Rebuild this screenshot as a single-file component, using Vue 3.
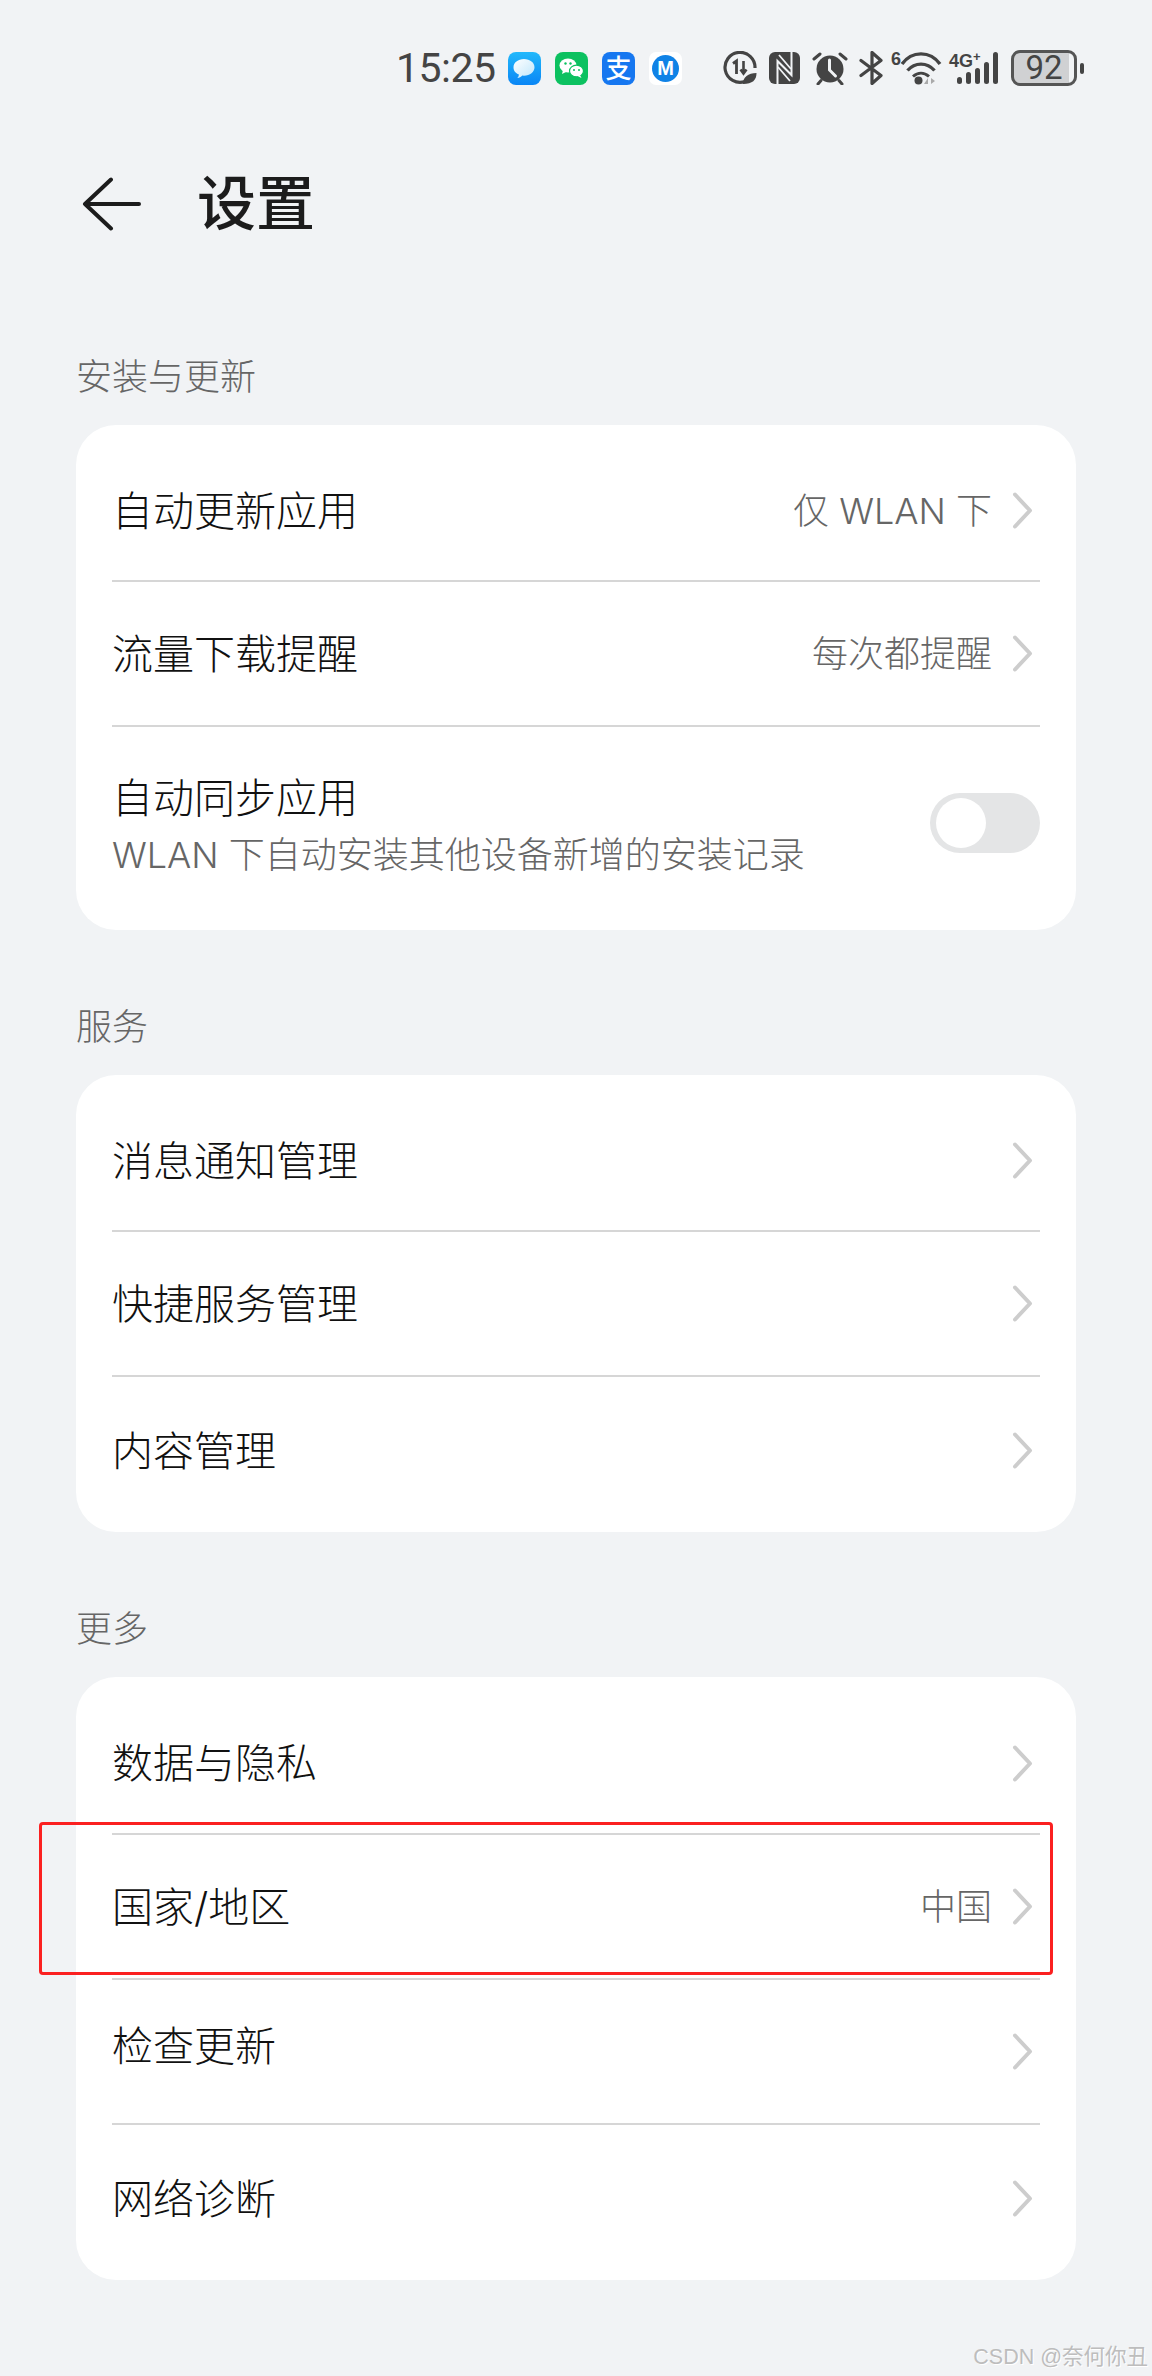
<script setup>
const sections = [
  {
    title: '安装与更新',
    rows: [
      { label: '自动更新应用', value: '仅 WLAN 下', h: 141 },
      { label: '流量下载提醒', value: '每次都提醒', h: 145 },
      { label: '自动同步应用', sub: 'WLAN 下自动安装其他设备新增的安装记录', toggle: true, h: 195 },
    ],
  },
  {
    title: '服务',
    rows: [
      { label: '消息通知管理', h: 141 },
      { label: '快捷服务管理', h: 145 },
      { label: '内容管理', h: 147 },
    ],
  },
  {
    title: '更多',
    rows: [
      { label: '数据与隐私', h: 142 },
      { label: '国家/地区', value: '中国', h: 145 },
      { label: '检查更新', h: 145, raised: true },
      { label: '网络诊断', h: 147 },
    ],
  },
]
</script>

<template>
  <div class="page">
    <div class="status">
      <span class="time">15:25</span>
      <div class="apps">
        <svg class="app" viewBox="0 0 33 33">
          <defs>
            <linearGradient id="msgbg" x1="0" y1="0" x2="0" y2="1">
              <stop offset="0" stop-color="#22b8fb" />
              <stop offset="1" stop-color="#0a86f5" />
            </linearGradient>
            <linearGradient id="msgfg" x1="0" y1="0" x2="1" y2="1">
              <stop offset="0" stop-color="#ffffff" />
              <stop offset="1" stop-color="#bfe6fb" />
            </linearGradient>
          </defs>
          <rect width="33" height="33" rx="8" fill="url(#msgbg)" />
          <path d="M16 7c6 0 10.500 3.600 10.500 8.300 0 4.800-4.500 8.400-10.500 8.400l-1.700-.1c-1.300 1.400-3 2.300-5 2.500 1-1.100 1.500-2.300 1.600-3.700C7.500 21.500 5.500 18.700 5.500 15.300 5.500 10.600 10 7 16 7z" fill="url(#msgfg)" />
        </svg>
        <svg class="app" viewBox="0 0 33 33">
          <rect width="33" height="33" rx="8" fill="#0cc160" />
          <ellipse cx="13" cy="13.500" rx="8.500" ry="7" fill="#fff" />
          <path d="M8 18l-1 4 4-2z" fill="#fff" />
          <ellipse cx="21.500" cy="19" rx="7" ry="5.800" fill="#fff" stroke="#0cc160" stroke-width="1.200" />
          <path d="M25 23l1.500 3-4-2z" fill="#fff" />
          <circle cx="10.500" cy="11.500" r="1.200" fill="#0cc160" />
          <circle cx="15.500" cy="11.500" r="1.200" fill="#0cc160" />
          <circle cx="19" cy="18" r="1" fill="#0cc160" />
          <circle cx="24" cy="18" r="1" fill="#0cc160" />
        </svg>
        <div class="app alipay">支</div>
        <div class="app mbox"><span class="mdot">M</span></div>
      </div>
      <div class="sys">
        <svg class="s34" viewBox="0 0 34 34">
          <path d="M22 30.500A15 15 0 1 1 32 17" fill="none" stroke="#444" stroke-width="3.200" />
          <path d="M10 12.500l3.500-2.500V23" fill="none" stroke="#444" stroke-width="2.800" />
          <path d="M20.500 10v12M17.500 18.500l3 4 3-4" fill="none" stroke="#444" stroke-width="2.600" />
          <path d="M20 33c0-7 5-11 13.500-11 0 7-4 11-13.500 11z" fill="#444" />
        </svg>
        <svg class="nfc" viewBox="0 0 31 32">
          <rect width="31" height="32" rx="6" fill="#444" />
          <path d="M8.500 32V9l14 14V0" fill="none" stroke="#f1f3f5" stroke-width="2" />
          <path d="M10 3l12 14M9 15l12 14" fill="none" stroke="#f1f3f5" stroke-width="1.800" />
        </svg>
        <svg class="alarm" viewBox="0 0 36 34">
          <circle cx="18" cy="18" r="13.500" fill="#444" />
          <path d="M17.500 9v10l6 6" fill="none" stroke="#f1f3f5" stroke-width="3" stroke-linecap="round" />
          <path d="M2 8l6-5M34 8l-6-5M6 33l3-3.500M30 33l-3-3.500" fill="none" stroke="#444" stroke-width="3" stroke-linecap="round" />
        </svg>
        <svg class="bt" viewBox="0 0 25 34">
          <path d="M2 9.500l20 15-9 8V1.500l9 8-20 15" fill="none" stroke="#444" stroke-width="3.200" stroke-linejoin="round" stroke-linecap="round" />
        </svg>
        <svg class="wifi" viewBox="0 0 49 34">
          <text x="0" y="14" class="tiny">6</text>
          <path d="M11 13C21 -0.500 39-0.500 49 13" fill="none" stroke="#444" stroke-width="3.400" />
          <path d="M16.500 19.500C24 11 36 11 43.500 19.500" fill="none" stroke="#444" stroke-width="3.400" />
          <path d="M22 25.500C27 21 33 21 38 25.500" fill="none" stroke="#444" stroke-width="3" />
          <circle cx="27.500" cy="29.500" r="4" fill="#444" />
          <path d="M37 33v-6l-4 6zM40 27v6l4-3z" fill="#aaa" />
        </svg>
        <svg class="cell" viewBox="0 0 50 34">
          <text x="0" y="16" class="tiny">4G</text>
          <text x="24" y="10" class="tiny plus">+</text>
          <rect x="8" y="26" width="5" height="7" rx="2.500" fill="#444" />
          <rect x="17" y="21" width="5" height="12" rx="2.500" fill="#444" />
          <rect x="26" y="17" width="5" height="16" rx="2.500" fill="#444" />
          <rect x="35" y="11" width="5" height="22" rx="2.500" fill="#444" />
          <rect x="44" y="1" width="5" height="32" rx="2.500" fill="#444" />
        </svg>
        <div class="battery">
          <div class="cell-body"><span class="pct">92</span></div>
          <div class="tip"></div>
        </div>
      </div>
    </div>

    <div class="header">
      <svg class="back" viewBox="0 0 60 54">
        <path d="M29 2.500L3 27l26 24.500M3 27h54" fill="none" stroke="#1c1c1c" stroke-width="4" stroke-linecap="round" stroke-linejoin="round" />
      </svg>
      <h1 class="title">设置</h1>
    </div>

    <section v-for="s in sections" :key="s.title" class="section">
      <div class="section-title">{{ s.title }}</div>
      <div class="card">
        <div v-for="r in s.rows" :key="r.label" class="row" :style="{ height: r.h + 'px' }">
          <div class="text" :class="{ raised: r.raised }">
            <div class="label">{{ r.label }}</div>
            <div v-if="r.sub" class="sub">{{ r.sub }}</div>
          </div>
          <div v-if="r.toggle" class="toggle"><div class="knob"></div></div>
          <template v-else>
            <span v-if="r.value" class="value">{{ r.value }}</span>
            <svg class="chev" viewBox="0 0 21 37">
              <path d="M3 2.500L18 18.500 3 34.500" fill="none" stroke="#cdcdcd" stroke-width="4" stroke-linecap="round" stroke-linejoin="round" />
            </svg>
          </template>
        </div>
      </div>
    </section>

    <div class="highlight"></div>
    <div class="watermark">CSDN @奈何你丑</div>
  </div>
</template>

<style scoped>
.page {
  position: relative;
  width: 1152px;
  height: 2376px;
  overflow: hidden;
  background: #f1f3f5;
  font-family: Inter, "Noto Sans CJK SC", "Noto Sans", sans-serif;
  font-weight: 300;
  color: #111;
}
.status {
  display: flex;
  align-items: center;
  height: 34px;
  padding: 51px 0 0 396px;
}
.time {
  flex: none;
  width: 99px;
  font-family: Roboto, sans-serif;
  font-weight: 400;
  font-size: 41px;
  letter-spacing: -0.5px;
  line-height: 34px;
  color: #444;
  white-space: nowrap;
}
.apps {
  display: flex;
  gap: 14px;
  margin-left: 13px;
}
.app {
  width: 33px;
  height: 33px;
  flex: none;
}
.alipay {
  display: flex;
  align-items: center;
  justify-content: center;
  border-radius: 8px;
  background: #1677f0;
  color: #fff;
  font-size: 26px;
  font-weight: 500;
  line-height: 33px;
}
.mbox {
  display: flex;
  align-items: center;
  justify-content: center;
  border-radius: 7px;
  background: #fff;
}
.mdot {
  width: 27px;
  height: 27px;
  border-radius: 50%;
  background: #0f82e6;
  color: #fff;
  font-family: "Liberation Sans", sans-serif;
  font-size: 20px;
  font-weight: 700;
  line-height: 27px;
  text-align: center;
}
.sys {
  display: flex;
  align-items: center;
  margin-left: 41px;
}
.s34 {
  width: 34px;
  height: 34px;
}
.nfc {
  width: 31px;
  height: 32px;
  margin-left: 12px;
}
.alarm {
  width: 36px;
  height: 34px;
  margin-left: 12px;
}
.bt {
  width: 25px;
  height: 34px;
  margin-left: 11px;
}
.wifi {
  width: 49px;
  height: 34px;
  margin-left: 7px;
  overflow: visible;
}
.cell {
  width: 50px;
  height: 34px;
  margin-left: 9px;
  overflow: visible;
}
.tiny {
  font-family: "Liberation Sans", sans-serif;
  font-size: 18px;
  font-weight: 700;
  fill: #444;
}
.plus {
  font-size: 13px;
}
.battery {
  display: flex;
  align-items: center;
  margin-left: 12px;
}
.cell-body {
  box-sizing: border-box;
  display: flex;
  align-items: center;
  justify-content: center;
  width: 66px;
  height: 36px;
  border: 3px solid #555;
  border-radius: 9px;
  background: linear-gradient(to right, #d0d1d3 92%, #f1f3f5 92%);
}
.pct {
  font-family: Roboto, sans-serif;
  font-weight: 400;
  font-size: 33px;
  line-height: 30px;
  color: #444;
}
.tip {
  width: 4px;
  height: 11px;
  margin-left: 3px;
  border-radius: 2px;
  background: #444;
}
.header {
  box-sizing: border-box;
  display: flex;
  align-items: center;
  height: 268px;
  padding: 0 0 31px 82px;
}
.back {
  width: 60px;
  height: 54px;
  flex: none;
}
.title {
  margin: 0 0 0 55px;
  font-size: 59px;
  font-weight: 500;
  line-height: 70px;
  color: #1c1c1c;
}
.section {
  margin-bottom: 73px;
}
.section-title {
  height: 48px;
  margin-bottom: 24px;
  padding-left: 76px;
  font-size: 36px;
  line-height: 48px;
  color: #666;
}
.card {
  box-sizing: border-box;
  width: 1000px;
  margin-left: 76px;
  padding: 16px 36px 8px;
  border-radius: 40px;
  background: #fff;
}
.row {
  box-sizing: border-box;
  display: flex;
  align-items: center;
}
.row:not(:last-child) {
  border-bottom: 2px solid #d6d6d6;
}
.text {
  flex: 1;
  min-width: 0;
}
.raised {
  padding-bottom: 12px;
}
.label {
  font-size: 41px;
  line-height: 56px;
  color: #111;
}
.sub {
  margin-top: 4px;
  font-size: 36px;
  line-height: 50px;
  color: #666;
  white-space: nowrap;
}
.value {
  font-size: 36px;
  line-height: 50px;
  color: #666;
  white-space: nowrap;
}
.chev {
  width: 21px;
  height: 37px;
  margin: 0 7px 0 20px;
  flex: none;
}
.toggle {
  box-sizing: border-box;
  display: flex;
  align-items: center;
  width: 110px;
  height: 60px;
  margin-bottom: 4px;
  padding-left: 6px;
  border-radius: 30px;
  background: #e4e5e6;
  flex: none;
}
.knob {
  width: 50px;
  height: 50px;
  border-radius: 50%;
  background: #fff;
}
.highlight {
  position: absolute;
  left: 39px;
  top: 1822px;
  box-sizing: border-box;
  width: 1014px;
  height: 153px;
  border: 3px solid #fb2020;
  border-radius: 4px;
}
.watermark {
  position: absolute;
  right: 4px;
  top: 2340px;
  font-family: "Liberation Sans", "Noto Sans CJK SC", sans-serif;
  font-weight: 400;
  font-size: 21.5px;
  line-height: 34px;
  color: #bdbdbd;
  text-shadow: 1px 1px 0 #fff;
  white-space: nowrap;
}
</style>

<style>
body {
  margin: 0;
  background: #f1f3f5;
}
</style>
